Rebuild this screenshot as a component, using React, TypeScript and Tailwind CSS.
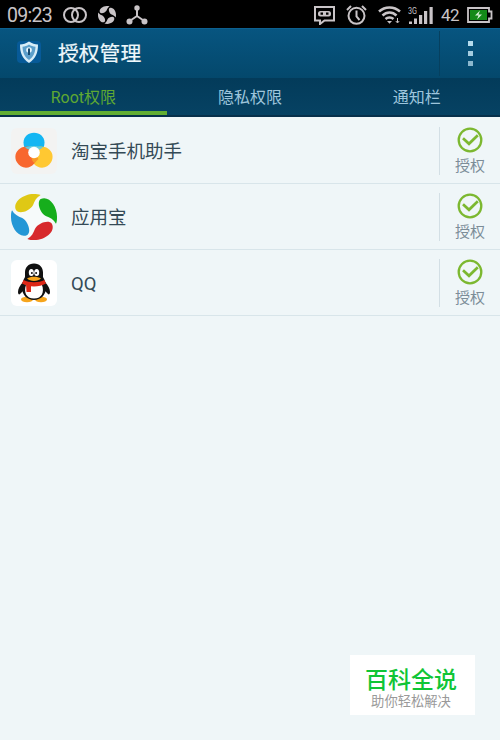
import React, { useState } from 'react';

interface AppEntry {
  name: string;
  icon: React.ReactNode;
}

const TABS = ['Root权限', '隐私权限', '通知栏'];

const TAOBAO_PETAL = 'M12.500 14.500c0-5.500 4.700-9.700 10.500-9.700s10.500 4.200 10.500 9.700c0 5.500-3.500 12-10.500 12S12.500 20 12.500 14.500z';
const SWIRL_BLADE = 'M29 5C37 1 45 12 45 22C45 25 45 27 44 29C42 25 38 23 34 21.500C28 18 25 8 29 5z';

function TaobaoIcon() {
  return (
    <svg width="46" height="46" viewBox="0 0 46 46">
      <rect width="46" height="46" rx="6" fill="#f3f3f2" />
      <path d={TAOBAO_PETAL} fill="#14b6f3" />
      <path d={TAOBAO_PETAL} transform="rotate(120 23 24.5)" fill="#ffc832" />
      <path d={TAOBAO_PETAL} transform="rotate(240 23 24.5)" fill="#f8672f" />
      <path d="M14 19.500c5-2 12.500-2 18 0l-9 5z" fill="#62cbe0" />
      <path d="M22.500 25l5 6-4 4c-3-2-4-6-1-10z" fill="#f89a28" />
      <circle cx="23" cy="24.500" r="5.800" fill="#fff" />
    </svg>
  );
}

function YingyongbaoIcon() {
  return (
    <svg width="46" height="46" viewBox="0 0 45 45">
      <circle cx="22.500" cy="22.500" r="20" fill="#f6fafa" />
      <path d={SWIRL_BLADE} fill="#16ae1c" />
      <path d={SWIRL_BLADE} transform="rotate(90 22.5 22.5)" fill="#d7292c" />
      <path d={SWIRL_BLADE} transform="rotate(180 22.5 22.5)" fill="#2497d6" />
      <path d={SWIRL_BLADE} transform="rotate(270 22.5 22.5)" fill="#dfc815" />
    </svg>
  );
}

function QQIcon() {
  return (
    <svg width="46" height="46" viewBox="0 0 46 46">
      <rect width="46" height="46" rx="6" fill="#fff" />
      <path d="M12 22c-3 3-5 7-5 10 0 2 1 3 2 2l4-4zM34 22c3 3 5 7 5 10 0 2-1 3-2 2l-4-4z" fill="#111" />
      <ellipse cx="16" cy="39.500" rx="6" ry="2.700" fill="#f6a51c" />
      <ellipse cx="30" cy="39.500" rx="6" ry="2.700" fill="#f6a51c" />
      <path d="M23 3.500c-5.800 0-9 4-9 9V17c-2 3-3 7-3 11 0 7 5.300 12 12 12s12-5 12-12c0-4-1-8-3-11v-4.500c0-5-3.200-9-9-9z" fill="#111" />
      <path d="M15 25h16c2.500 7 0 13.500-8 13.500S12.500 32 15 25z" fill="#fff" />
      <path d="M12.500 20c6 3 15 3 21 0l1.500 3.500c-7 4-17 4-24 0z" fill="#dd2818" />
      <path d="M15 24l5 1v7h-4.500z" fill="#dd2818" />
      <ellipse cx="20.300" cy="12.500" rx="2.500" ry="3.600" fill="#fff" />
      <ellipse cx="25.700" cy="12.500" rx="2.500" ry="3.600" fill="#fff" />
      <circle cx="20.900" cy="13" r="1" fill="#111" />
      <circle cx="25.100" cy="13" r="1" fill="#111" />
      <path d="M16 18.500c3.500-2.300 10.500-2.300 14 0-3 3.300-11 3.300-14 0z" fill="#f6a51c" />
    </svg>
  );
}

const APPS: AppEntry[] = [
  { name: '淘宝手机助手', icon: <TaobaoIcon /> },
  { name: '应用宝', icon: <YingyongbaoIcon /> },
  { name: 'QQ', icon: <QQIcon /> },
];

function StatusBar() {
  return (
    <div className="flex h-7 items-center bg-black pl-[7px] pr-[7px] pt-[2px] text-[#c9c4c7]">
      <span className="w-[56px] pt-[2px] font-[Roboto] text-[19.500px] leading-none tracking-[-0.7px]">09:23</span>
      <svg width="24" height="18" viewBox="0 0 24 18" fill="none" stroke="currentColor" strokeWidth="2">
        <circle cx="8" cy="9" r="7" />
        <circle cx="16" cy="9" r="7" />
      </svg>
      <svg className="ml-[11px]" width="18" height="18" viewBox="0 0 45 45" fill="currentColor">
        <path d={SWIRL_BLADE} />
        <path d={SWIRL_BLADE} transform="rotate(90 22.5 22.5)" />
        <path d={SWIRL_BLADE} transform="rotate(180 22.5 22.5)" />
        <path d={SWIRL_BLADE} transform="rotate(270 22.5 22.5)" />
      </svg>
      <svg className="ml-[10px]" width="22" height="20" viewBox="0 0 22 20" fill="currentColor">
        <path d="M11 3v9M11 11L3 16.500M11 11l8 5.500" stroke="currentColor" strokeWidth="2" />
        <circle cx="11" cy="3" r="2.700" />
        <circle cx="3.500" cy="16.500" r="3" />
        <circle cx="18.500" cy="16.500" r="3" />
      </svg>
      <svg className="ml-auto" width="21" height="20" viewBox="0 0 21 20" fill="none" stroke="currentColor" strokeWidth="2">
        <path d="M1 2h19v13.500h-9.500L6 19v-3.500H1z" />
        <rect x="4" y="6" width="13" height="5.500" rx="2.500" fill="currentColor" stroke="none" />
        <path d="M6.500 8.700h2.500M12 8.700h2.500" stroke="#000" strokeWidth="2.200" />
      </svg>
      <svg className="ml-[11px]" width="21" height="20" viewBox="0 0 21 20" fill="none" stroke="currentColor" strokeWidth="2">
        <circle cx="10.500" cy="10.800" r="8" />
        <path d="M10.500 5.500v6l3 3.500M1 5l4-4M20 5l-4-4" />
      </svg>
      <svg className="ml-[11px]" width="23" height="18" viewBox="0 0 23 18" fill="none" stroke="currentColor" strokeWidth="2.500">
        <path d="M1 5.500c6-5.500 15-5.500 21 0M4.500 9.500c4-4 10-4 14 0M7.500 13c2.200-2 5.800-2 8 0" />
        <path d="M9 15l2.500 2.800L14 15z" fill="currentColor" stroke="none" />
        <path d="M19.500 12v4.500M17.800 15l1.700 2 1.700-2" strokeWidth="1" />
      </svg>
      <svg className="ml-[7px]" width="26" height="18" viewBox="0 0 26 18" fill="currentColor">
        <text x="0" y="7.500" fontSize="8.500" fontFamily="Roboto, sans-serif" textLength="9" lengthAdjust="spacingAndGlyphs">3G</text>
        <path d="M1 15.500h3V18H1zM6 12.500h3V18H6zM11 9h3.200v9H11zM16 5h3.200v13H16zM21.500 1h3.200v17h-3.200z" />
      </svg>
      <span className="ml-[7px] w-[19px] font-[Roboto] text-[17px] leading-none tracking-[-0.5px]">42</span>
      <svg className="ml-[7px]" width="26" height="16" viewBox="0 0 26 16">
        <path d="M1 1h21v3.500h2.500v7H22V15H1z" fill="none" stroke="currentColor" strokeWidth="1.800" />
        <rect x="3" y="3" width="17" height="10" fill="#148a18" />
        <path d="M13 3.500L8 8.500h3.500L10 12.500l5-5h-3.500z" fill="#d5efd5" />
      </svg>
    </div>
  );
}

function TitleBar() {
  return (
    <header className="flex h-[50px] items-center border-t border-[#0c6090] bg-linear-to-b from-[#075580] to-[#04486c] pl-4">
      <svg className="-mt-[3px]" width="26" height="24" viewBox="0 0 26 24">
        <rect x="1" y="1" width="24" height="22" rx="4" fill="#075a98" />
        <path d="M13 1.500c3 2 6 3 9 3 0 8-2 14-9 18.500C6 18.500 4 12.500 4 4.500c3 0 6-1 9-3z" fill="#d8edf8" />
        <path d="M13 4.500c2 1.500 4 2 6.500 2.200-.3 6-2 10-6.500 13.300-4.500-3.300-6.200-7.300-6.500-13.300C9 6.500 11 6 13 4.500z" fill="#5d9fcb" />
        <circle cx="13" cy="10" r="2.800" fill="#e8f6ff" />
        <path d="M12 8.500h2v6.500h-2z" fill="#174a70" />
      </svg>
      <h1 className="ml-4 pt-px text-[20.800px] leading-none text-[#eef8fc] [-webkit-text-stroke:0.2px_#eef8fc]">授权管理</h1>
      <button className="ml-auto flex h-[45px] w-[61px] flex-col items-center justify-center gap-[5px] border-l border-[#06405f] pb-px">
        <span className="size-[5px] bg-[#b5dced]" />
        <span className="size-[5px] bg-[#a5cde0]" />
        <span className="size-[5px] bg-[#8cb8ce]" />
      </button>
    </header>
  );
}

function AppRow({ app }: { app: AppEntry }) {
  return (
    <li className="flex h-[66px] items-center border-b border-[#d8e5ea] pl-[11px]">
      {app.icon}
      <span className="ml-[14px] pt-[4px] text-[18.500px] leading-none text-[#344a56]">{app.name}</span>
      <button className="ml-auto flex h-[48px] w-[61px] flex-col items-center justify-center border-l border-[#d3dfe5]">
        <svg width="26" height="26" viewBox="0 0 26 26" fill="none" stroke="#7cb830">
          <circle cx="13" cy="13" r="11.300" strokeWidth="2.300" />
          <path d="M6 11.200l6 5.600 8.800-8.600" strokeWidth="2.700" />
        </svg>
        <span className="mt-[6px] text-[15px] leading-none text-[#7c8d98]">授权</span>
      </button>
    </li>
  );
}

export default function App() {
  const [activeTab, setActiveTab] = useState(0);

  return (
    <div className="flex h-[740px] w-[500px] flex-col overflow-hidden bg-[#eff6f8] font-[Roboto,'Noto_Sans_CJK_SC',sans-serif]">
      <StatusBar />
      <TitleBar />
      <nav className="flex h-[39px] border-b-2 border-[#07304b] bg-linear-to-b from-[#033b5a] to-[#064263]">
        {TABS.map((tab, index) => (
          <button
            key={tab}
            onClick={() => setActiveTab(index)}
            className={`flex flex-1 items-center justify-center border-b-4 pt-[6px] text-[16px] leading-none ${
              index === activeTab ? 'border-[#62ae32] text-[#5fa832]' : 'border-transparent text-[#9dc5dc]'
            }`}
          >
            {tab}
          </button>
        ))}
      </nav>
      <ul className="pt-px">
        {APPS.map((app) => (
          <AppRow key={app.name} app={app} />
        ))}
      </ul>
      <div className="mb-[25px] mr-[25px] mt-auto flex h-[60px] w-[125px] flex-col items-center self-end bg-white pr-[3px] pt-[14px]">
        <span className="text-[23px] font-medium leading-none text-[#10c536]">百科全说</span>
        <span className="mt-[3px] text-[13.300px] leading-none text-[#999]">助你轻松解决</span>
      </div>
    </div>
  );
}
